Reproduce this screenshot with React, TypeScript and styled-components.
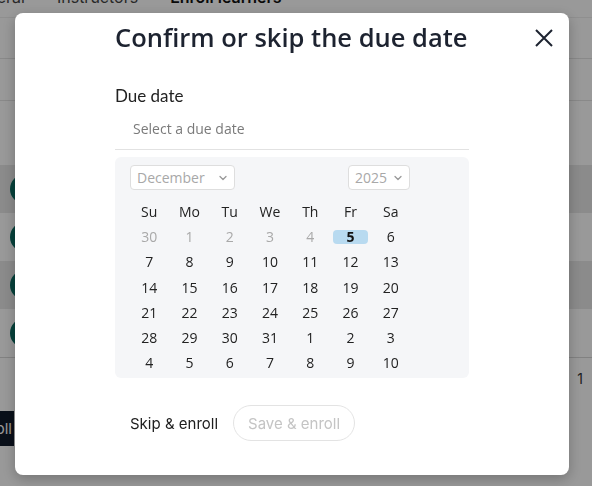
import React from 'react'
import styled, { createGlobalStyle, css } from 'styled-components'

const GlobalStyle = createGlobalStyle`
    html, body {
        margin: 0;
        padding: 0;
        background: #ffffff;
        overflow: hidden;
    }
    body {
        font-family: 'Open Sans', 'Liberation Sans', sans-serif;
        color: #1d2330;
    }
`

// background page (dimmed by the overlay)
const Page = styled.div`
    width: 592px;
    height: 486px;
    display: flex;
    flex-direction: column;
    background: #ffffff;
`

const TabBar = styled.div`
    display: flex;
    gap: 32px;
    height: 31px;
    box-sizing: border-box;
    margin-top: -13px;
    margin-left: -34px;
    border-bottom: 1px solid #eeeeee;
    font-family: 'Inter', sans-serif;
    font-size: 16px;
    line-height: 20px;
    color: #333;
`

const Tab = styled.span<{ active?: boolean }>`
    font-weight: ${({ active }) => (active ? 600 : 400)};
    color: ${({ active }) => (active ? '#111' : '#444')};
`

const Band = styled.div<{ h: number }>`
    height: ${({ h }) => h}px;
    border-bottom: 1px solid #e4e4e4;
`

const Rows = styled.div`
    margin-top: 64px;
    display: flex;
    flex-direction: column;
    border-bottom: 1px solid #d8d8d8;
`

const Row = styled.div<{ striped?: boolean }>`
    height: 48px;
    display: flex;
    align-items: center;
    padding-left: 10px;
    background: ${({ striped }) => (striped ? '#e8e8e8' : '#ffffff')};
`

const Avatar = styled.div`
    width: 30px;
    height: 30px;
    border-radius: 50%;
    background: #0b6e63;
`

const Pager = styled.div`
    display: flex;
    justify-content: flex-end;
    padding: 12px 9px 0 0;
    font-family: 'Inter', sans-serif;
    font-size: 14px;
    color: #333;
`

const EnrollButton = styled.div`
    margin-top: 24px;
    margin-left: -70px;
    width: 84px;
    height: 35px;
    display: flex;
    align-items: center;
    justify-content: flex-end;
    padding-right: 2px;
    background: #101a2b;
    color: #ffffff;
    font-family: 'Inter', sans-serif;
    font-size: 15px;
    box-sizing: border-box;
`

// modal
const Overlay = styled.div`
    position: fixed;
    inset: 0;
    background: rgba(0, 0, 0, 0.4);
    display: flex;
    align-items: flex-start;
    justify-content: flex-start;
    padding: 13px 0 0 15px;
`

const Modal = styled.div`
    width: 554px;
    height: 462px;
    box-sizing: border-box;
    background: #ffffff;
    border-radius: 8px;
    box-shadow: 0 4px 14px rgba(0, 0, 0, 0.25);
    padding: 10px 13px 0 100px;
    display: flex;
    flex-direction: column;
`

const Header = styled.div`
    display: flex;
    align-items: flex-start;
    justify-content: space-between;
`

const Title = styled.h2`
    margin: 0;
    font-family: 'Open Sans', sans-serif;
    font-weight: 600;
    font-size: 25.5px;
    line-height: 28px;
    color: #1d2330;
`

const CloseButton = styled.button`
    border: none;
    background: none;
    padding: 0;
    margin-top: 3px;
    width: 24px;
    height: 24px;
    cursor: pointer;
    color: #1d2330;
`

const Body = styled.div`
    width: 354px;
    display: flex;
    flex-direction: column;
`

const Label = styled.label`
    margin-top: 35px;
    font-family: 'Lato', sans-serif;
    font-weight: 400;
    font-size: 17px;
    line-height: 20px;
    color: #222;
`

const DateInput = styled.input`
    margin-top: 2px;
    height: 42px;
    box-sizing: border-box;
    border: none;
    border-bottom: 1px solid #e2e2e2;
    padding: 0 18px;
    font-family: 'Open Sans', sans-serif;
    font-size: 14px;
    color: #333;
    outline: none;
    &::placeholder {
        color: #7a7a7a;
    }
`

const Calendar = styled.div`
    margin-top: 7px;
    background: #f5f6f8;
    border-radius: 6px;
    padding: 8px 14px 0 14px;
    height: 221px;
    box-sizing: border-box;
`

const SelectRow = styled.div`
    display: flex;
    align-items: center;
    gap: 113px;
    padding-left: 1px;
`

const Select = styled.div<{ w: number }>`
    width: ${({ w }) => w}px;
    height: 25px;
    box-sizing: border-box;
    border: 1px solid #dedede;
    border-radius: 4px;
    background: #ffffff;
    display: flex;
    align-items: center;
    justify-content: space-between;
    padding: 0 6px 0 6px;
    font-family: 'Open Sans', sans-serif;
    font-size: 14px;
    color: #a8a8a8;
`

const Grid = styled.div`
    margin-top: 9px;
    width: 282px;
    display: grid;
    grid-template-columns: repeat(7, 1fr);
    grid-auto-rows: 25.2px;
    font-family: 'Open Sans', sans-serif;
    font-size: 14px;
`

const DayName = styled.div`
    display: flex;
    align-items: center;
    justify-content: center;
    color: #222;
`

const Day = styled.div<{ muted?: boolean; selected?: boolean }>`
    display: flex;
    align-items: center;
    justify-content: center;
    color: ${({ muted }) => (muted ? '#a9a9a9' : '#222')};
    ${({ selected }) =>
        selected &&
        css`
            font-weight: 700;
            color: #111;
            & > span {
                display: block;
                width: 35px;
                height: 14px;
                line-height: 14px;
                text-align: center;
                border-radius: 4px;
                background: #b8daf0;
            }
        `}
`

const Footer = styled.div`
    margin-top: 27px;
    display: flex;
    align-items: center;
    gap: 15px;
    padding-left: 15px;
`

const TextButton = styled.button`
    border: none;
    background: none;
    padding: 0;
    font-family: 'Inter', sans-serif;
    font-size: 15px;
    color: #1d1d1d;
    cursor: pointer;
`

const PillButton = styled.button`
    height: 36px;
    padding: 0 14px;
    border: 1px solid #e3e3e3;
    border-radius: 18px;
    background: #ffffff;
    font-family: 'Inter', sans-serif;
    font-size: 15px;
    color: #c4c4c4;
`

const Chevron = () => (
    <svg width="10" height="10" viewBox="0 0 10 10" fill="none">
        <path d="M2 3.5 L5 6.5 L8 3.5" stroke="#999" strokeWidth="1.3" strokeLinecap="round" strokeLinejoin="round" />
    </svg>
)

const weekDays = ['Su', 'Mo', 'Tu', 'We', 'Th', 'Fr', 'Sa']

type Cell = { n: number; muted?: boolean; selected?: boolean }

function buildDays(): Cell[] {
    const cells: Cell[] = [30, 1, 2, 3, 4].map((n) => ({ n, muted: true }))
    for (let d = 5; d <= 31; d++) cells.push({ n: d, selected: d === 5 })
    for (let d = 1; d <= 10; d++) cells.push({ n: d })
    return cells
}

export default function App() {
    const days = buildDays()
    return (
        <>
            <GlobalStyle />
            <Page>
                <TabBar>
                    <Tab>General</Tab>
                    <Tab>Instructors</Tab>
                    <Tab active>Enroll learners</Tab>
                </TabBar>
                <Band h={40} />
                <Band h={41} />
                <Rows>
                    <Row striped>
                        <Avatar />
                    </Row>
                    <Row>
                        <Avatar />
                    </Row>
                    <Row striped>
                        <Avatar />
                    </Row>
                    <Row>
                        <Avatar />
                    </Row>
                </Rows>
                <Pager>1</Pager>
                <EnrollButton>Enroll</EnrollButton>
            </Page>
            <Overlay>
                <Modal>
                    <Header>
                        <Title>Confirm or skip the due date</Title>
                        <CloseButton aria-label="Close">
                            <svg width="24" height="24" viewBox="0 0 24 24" fill="none">
                                <path d="M4 4 L20 20 M20 4 L4 20" stroke="currentColor" strokeWidth="2" />
                            </svg>
                        </CloseButton>
                    </Header>
                    <Body>
                        <Label>Due date</Label>
                        <DateInput placeholder="Select a due date" />
                        <Calendar>
                            <SelectRow>
                                <Select w={105}>
                                    December <Chevron />
                                </Select>
                                <Select w={62}>
                                    2025 <Chevron />
                                </Select>
                            </SelectRow>
                            <Grid>
                                {weekDays.map((w) => (
                                    <DayName key={w}>{w}</DayName>
                                ))}
                                {days.map((c, i) => (
                                    <Day key={i} muted={c.muted} selected={c.selected}>
                                        <span>{c.n}</span>
                                    </Day>
                                ))}
                            </Grid>
                        </Calendar>
                    </Body>
                    <Footer>
                        <TextButton>Skip &amp; enroll</TextButton>
                        <PillButton disabled>Save &amp; enroll</PillButton>
                    </Footer>
                </Modal>
            </Overlay>
        </>
    )
}
